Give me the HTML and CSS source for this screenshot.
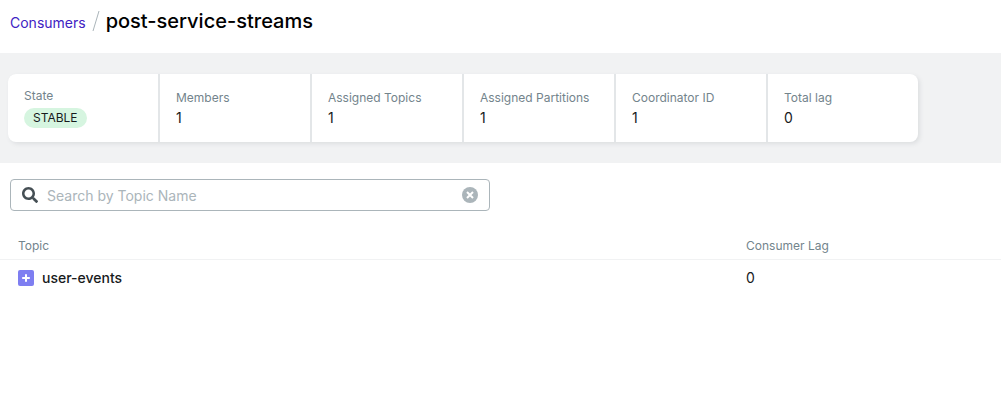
FILE: index.html
```html
<!DOCTYPE html>
<html lang="en">
<head>
<meta charset="utf-8">
<title>post-service-streams</title>
<link rel="stylesheet" href="styles.css">
</head>
<body>
<header class="heading">
  <a class="back" href="#">Consumers</a>
  <svg class="slash" viewBox="0 0 8 22" aria-hidden="true"><path d="M7 1 1 21" /></svg>
  <h1 class="title">post-service-streams</h1>
</header>
<section class="metrics">
  <dl class="cards">
    <div class="card"><dt>State</dt><dd class="state"><span class="tag">STABLE</span></dd></div>
    <div class="card"><dt>Members</dt><dd>1</dd></div>
    <div class="card"><dt>Assigned Topics</dt><dd>1</dd></div>
    <div class="card"><dt>Assigned Partitions</dt><dd>1</dd></div>
    <div class="card"><dt>Coordinator ID</dt><dd>1</dd></div>
    <div class="card"><dt>Total lag</dt><dd>0</dd></div>
  </dl>
</section>
<main>
  <div class="search">
    <svg class="glass" viewBox="0 0 512 512" aria-hidden="true"><path d="M505 442.700 405.300 343c-4.500-4.500-10.600-7-17-7H372c27.600-35.300 44-79.700 44-128C416 93.100 322.900 0 208 0S0 93.100 0 208s93.100 208 208 208c48.300 0 92.700-16.400 128-44v16.300c0 6.400 2.500 12.500 7 17l99.700 99.700c9.400 9.400 24.600 9.400 33.900 0l28.300-28.300c9.400-9.400 9.400-24.600.1-34zM208 336c-70.700 0-128-57.200-128-128 0-70.700 57.200-128 128-128 70.700 0 128 57.200 128 128 0 70.700-57.200 128-128 128z"/></svg>
    <input class="field" type="text" aria-label="Search by Topic Name" placeholder="Search by Topic Name">
    <button class="clear" type="button" aria-label="Clear search"><svg viewBox="0 0 16 16" aria-hidden="true"><circle cx="8" cy="8" r="8"/><path d="m5 5 6 6m0-6-6 6"/></svg></button>
  </div>
  <table class="topics">
    <thead><tr><th>Topic</th><th class="lag">Consumer Lag</th></tr></thead>
    <tbody><tr>
      <td><div class="topic"><button class="expand" type="button" aria-label="Expand user-events"><svg viewBox="0 0 16 16" aria-hidden="true"><path d="M8 4.200v7.600M4.200 8h7.600"/></svg></button><span class="name">user-events</span></div></td>
      <td>0</td>
    </tr></tbody>
  </table>
</main>
</body>
</html>
```
FILE: styles.css
```css
* { box-sizing: border-box; }
body { margin: 0; background: #fff; color: #171a1c; font-family: Inter, sans-serif; font-size: 14px; line-height: 20px; }
button { border: 0; padding: 0; cursor: pointer; }
svg { display: block; }
.heading { display: flex; align-items: center; gap: 6px; padding: 5px 10px 16px; }
.back { color: #4022c3; text-decoration: none; padding-top: 4px; }
.slash { width: 8px; height: 22px; fill: none; stroke: #abb5ba; stroke-width: 1; }
.title { margin: 0; font-size: 20px; line-height: 32px; font-weight: 500; color: #000; }
.metrics { background: #f1f2f3; padding: 21px 8px; }
.cards { display: flex; gap: 2px; width: fit-content; margin: 0; border-radius: 8px; background: #e3e6e8; overflow: hidden; box-shadow: 2px 2px 4px #dddfe1; }
.card { display: flex; flex-direction: column; justify-content: center; width: 150px; padding: 12px 16px; background: #fff; }
.card dt { font-size: 12px; color: #73848c; }
.card dd { margin: 0; }
.card .state { padding: 2px 0; }
.tag { display: block; width: fit-content; padding: 0 9px; border-radius: 10px; background: #d6f5e0; font-size: 12px; }
.search { display: flex; align-items: center; width: 480px; max-width: 100%; height: 32px; margin: 16px 10px 24px; padding: 0 11px; gap: 9px; border: 1px solid #abb5ba; border-radius: 4px; }
.glass { width: 16px; height: 16px; fill: #454f54; }
.field { flex: 1; min-width: 0; padding: 2px 0 0; border: 0; outline: 0; background: none; font: inherit; color: inherit; }
.field::placeholder { color: #abb5ba; opacity: 1; }
.clear { width: 16px; height: 16px; background: none; }
.clear circle { fill: #abb5ba; }
.clear path { fill: none; stroke: #fff; stroke-width: 2; }
.topics { width: 100%; border-collapse: collapse; table-layout: fixed; }
.topics th { padding: 1px 18px 3px; border-bottom: 1px solid #f1f2f3; text-align: left; font-size: 12px; font-weight: 400; color: #73848c; }
.topics .lag { width: 273px; }
.topics td { padding: 8px 18px; }
.topic { display: flex; align-items: center; gap: 8px; }
.expand { width: 16px; height: 16px; border-radius: 2px; background: #7e7ef1; }
.expand path { fill: none; stroke: #fff; stroke-width: 2; }
.name { font-weight: 500; }
```
